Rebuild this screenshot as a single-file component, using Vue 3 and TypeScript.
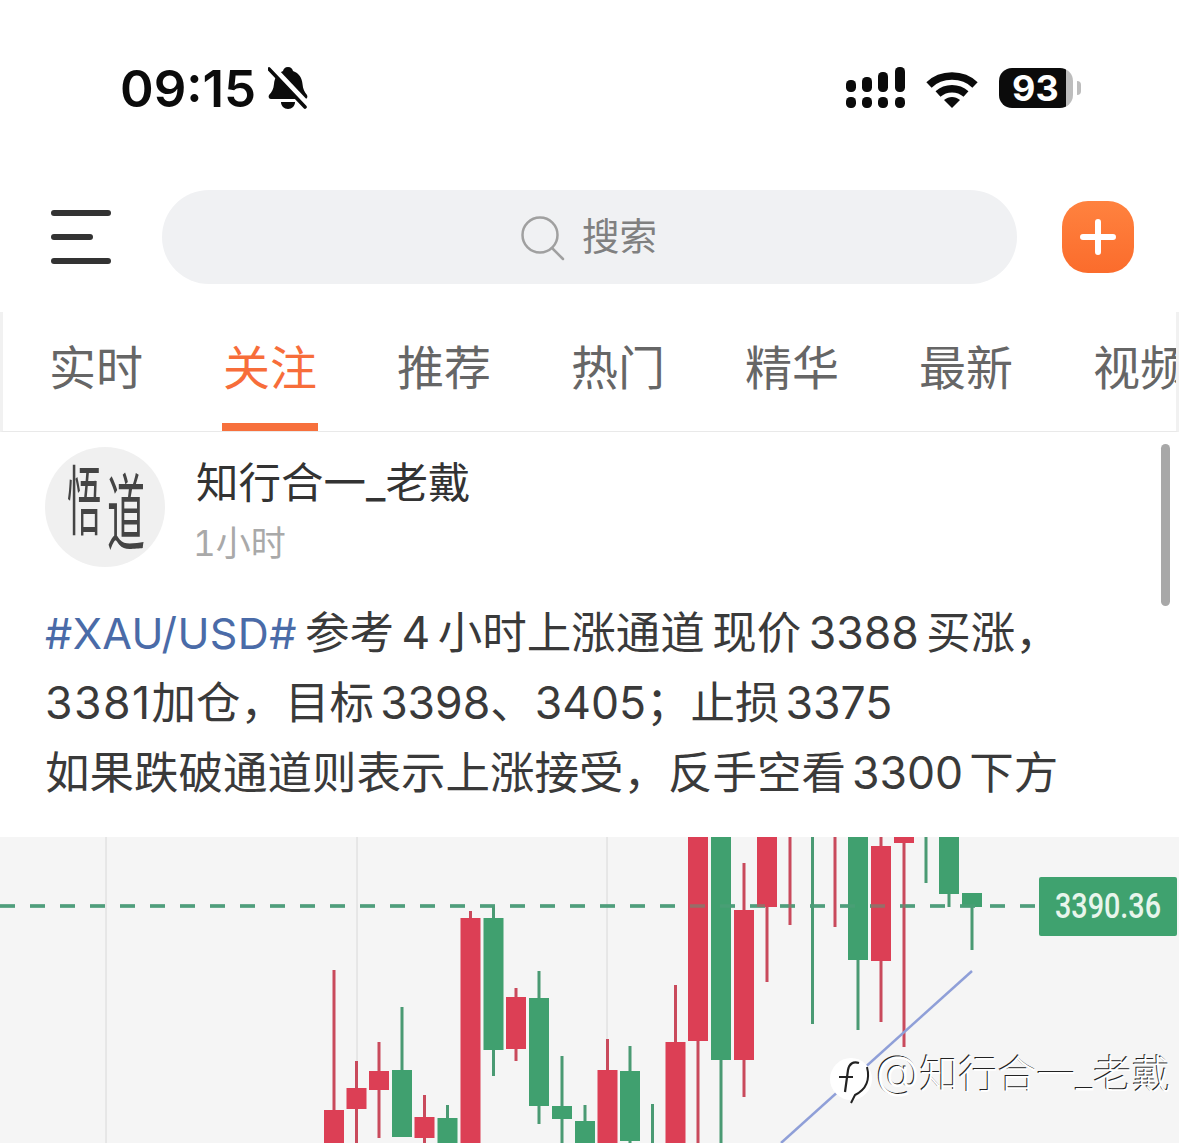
<script setup lang="ts">
type Candle = [number, 'r' | 'g', number, number, number, number]

const tabs: string[] = ['实时', '关注', '推荐', '热门', '精华', '最新', '视频']

// x, colour, wick top, wick bottom, body top, body bottom
const candles: Candle[] = [
  [334, 'r', 970, 1150, 1110, 1150],
  [356.5, 'r', 1061, 1150, 1088, 1109],
  [379, 'r', 1042, 1138, 1071, 1090],
  [402, 'g', 1007, 1137, 1070, 1137],
  [424.5, 'r', 1095, 1150, 1117, 1138],
  [447.5, 'g', 1105, 1150, 1118, 1150],
  [470.5, 'r', 911, 1150, 918, 1150],
  [493.5, 'g', 906, 1076, 918, 1050],
  [516, 'r', 988, 1061, 997, 1049],
  [539, 'g', 971, 1124, 998, 1106],
  [562, 'g', 1056, 1150, 1106, 1119],
  [585, 'g', 1105, 1150, 1121, 1150],
  [607.5, 'r', 1039, 1150, 1070, 1150],
  [630, 'g', 1046, 1150, 1071, 1141],
  [652.5, 'g', 1104, 1150, 1150, 1150],
  [675.5, 'r', 985, 1150, 1042, 1150],
  [698, 'r', 830, 1150, 830, 1041],
  [721, 'g', 830, 1150, 830, 1060],
  [744, 'r', 863, 1097, 910, 1060],
  [767, 'r', 830, 982, 830, 907],
  [790, 'r', 830, 925, 830, 830],
  [812.5, 'g', 830, 1024, 830, 830],
  [835, 'r', 830, 927, 830, 830],
  [858, 'g', 830, 1030, 830, 960],
  [881, 'r', 830, 1022, 846, 961],
  [904, 'r', 830, 1047, 830, 843],
  [926, 'g', 830, 883, 830, 830],
  [949, 'g', 830, 907, 830, 894],
  [972, 'g', 893, 950, 893, 907],
]

const bars: [number, number, number][] = [
  [846, 80, 12], [862, 77, 15], [878, 72, 20], [895, 67, 25],
]
const dots: number[] = [846, 862, 878, 895]
</script>

<template>
  <div class="page">
    <div class="status">
      <span class="time">09:15</span>
      <svg class="bell" width="40" height="42" viewBox="0 0 40 42">
        <path d="M20 0c3 0 4.500 2 5 4 6 2 9 7 9.500 13 .4 5 2 8 4.500 11 1 2 0 4-2 4H3c-2 0-3-2-2-4 3-3 4.500-6 5-11 .5-6 3.500-11 9-13 .5-2 2-4 5-4z" fill="#0b0b0b"/>
        <path d="M13 35h14c0 4-3 7-7 7s-7-3-7-7z" fill="#0b0b0b"/>
        <path d="M3 -1 39 37" stroke="#fff" stroke-width="6"/>
        <path d="M1 2 37 40" stroke="#0b0b0b" stroke-width="3.600" stroke-linecap="round"/>
      </svg>
      <svg class="signal" width="60" height="42" viewBox="846 67 60 42">
        <rect v-for="b in bars" :key="b[0]" :x="b[0]" :y="b[1]" width="10" :height="b[2]" rx="4.500" fill="#0b0b0b"/>
        <rect v-for="d in dots" :key="d" :x="d" y="97" width="10" height="11" rx="4.500" fill="#0b0b0b"/>
      </svg>
      <svg class="wifi" width="52" height="38" viewBox="0 0 52 38">
        <path d="M3 15C15 3 37 3 49 15" fill="none" stroke="#0b0b0b" stroke-width="7.500"/>
        <path d="M12 24c8-7 20-7 28 0" fill="none" stroke="#0b0b0b" stroke-width="7.500"/>
        <path d="M18 30c5-4 11-4 16 0l-8 8z" fill="#0b0b0b"/>
      </svg>
      <div class="battery">
        <div class="cell"><span class="level">93</span></div>
        <span class="nub"></span>
      </div>
    </div>

    <div class="searchbar">
      <div class="burger">
        <span class="bar"></span>
        <span class="bar short"></span>
        <span class="bar"></span>
      </div>
      <div class="search">
        <svg width="46" height="46" viewBox="0 0 46 46">
          <circle cx="20" cy="20" r="17.500" fill="none" stroke="#a0a0a0" stroke-width="2.500"/>
          <path d="M32 33 43 44" stroke="#a0a0a0" stroke-width="2.500" stroke-linecap="round"/>
        </svg>
        <span class="search-label">搜索</span>
      </div>
      <div class="plus">
        <svg width="36" height="36" viewBox="0 0 36 36">
          <path d="M18 3v30M3 18h30" stroke="#fff" stroke-width="6" stroke-linecap="round"/>
        </svg>
      </div>
    </div>

    <div class="tabs">
      <div v-for="(t, i) in tabs" :key="t" class="tab" :class="{ active: i === 1 }">{{ t }}</div>
    </div>

    <div class="post">
      <div class="scrollbar"></div>
      <div class="author">
        <div class="avatar">
          <span class="seal left">悟</span>
          <span class="seal right">道</span>
        </div>
        <div class="meta">
          <div class="name">知行合一_老戴</div>
          <div class="when">1小时</div>
        </div>
      </div>
      <div class="content">
        <div class="line"><span class="tag">#XAU/USD#</span> 参考 4 小时上涨通道 现价 3388 买涨，</div>
        <div class="line tight2"><span class="num">3381</span>加仓，目标 3398、3405；止损 3375</div>
        <div class="line tight">如果跌破通道则表示上涨接受，反手空看 3300 下方</div>
      </div>
    </div>

    <div class="chart">
      <svg class="plot" width="1179" height="306" viewBox="0 837 1179 306">
        <path d="M106 837v306M357 837v306M607 837v306" stroke="#d8d8d8" stroke-width="1"/>
        <path d="M0 906H1039" stroke="#4f9e7c" stroke-width="3.500" stroke-dasharray="15 15"/>
        <g v-for="c in candles" :key="c[0]">
          <rect :x="c[0] - 1.500" :y="c[2]" width="3" :height="c[3] - c[2]" :fill="c[1] === 'r' ? '#c94a5c' : '#4a9a73'"/>
          <rect :x="c[0] - 10" :y="c[4]" width="20" :height="Math.max(c[5] - c[4], 0)" :fill="c[1] === 'r' ? '#dc3f55' : '#40a06f'"/>
        </g>
        <path d="M0 906H1039" stroke="#4f9e7c" stroke-opacity="0.5" stroke-width="3.500" stroke-dasharray="15 15"/>
        <path d="M972 971 781 1143" stroke="#8f9fd8" stroke-width="2.500"/>
        <rect x="1039" y="877" width="138" height="59" rx="2" fill="#3fa26f"/>
        <text x="1055" y="918" class="price" textLength="106" lengthAdjust="spacingAndGlyphs">3390.36</text>
      </svg>
      <div class="mark">
        <svg class="mark-logo" width="46" height="52" viewBox="0 0 46 52">
          <circle cx="22" cy="24" r="21" fill="#fff"/>
          <path d="M30 8c-6-2-10 1-11 7l-3 22M10 22h14" fill="none" stroke="#222" stroke-width="2.200"/>
          <path d="M38 12c3 12 0 22-12 28l-4 8" fill="none" stroke="#222" stroke-width="2"/>
        </svg>
        <span class="mark-text"><span class="mark-at">@</span>知行合一_老戴</span>
      </div>
    </div>
  </div>
</template>

<style>
html, body { margin: 0; background: #fff; }
</style>

<style scoped>
.page {
  width: 1179px;
  height: 1143px;
  overflow: hidden;
  background: #fff;
  font-family: Inter, "Noto Sans CJK SC", sans-serif;
  display: flex;
  flex-direction: column;
}
.status {
  height: 176px;
  flex: none;
  display: flex;
  align-items: center;
  padding-left: 120px;
  box-sizing: border-box;
}
.time {
  font-size: 51px;
  font-weight: 600;
  color: #0b0b0b;
  letter-spacing: 0;
  line-height: 1;
}
.bell { margin-left: 12px; }
.signal { margin-left: auto; }
.wifi { margin-left: 20px; margin-top: 2px; }
.battery {
  display: flex;
  align-items: center;
  margin-left: 21px;
  margin-right: 98px;
}
.cell {
  width: 74px;
  height: 40px;
  border-radius: 13px;
  background: linear-gradient(90deg, #0b0b0b 90%, #bdbdbd 90%);
  display: flex;
  align-items: center;
  padding-left: 13px;
  box-sizing: border-box;
}
.level {
  color: #fff;
  font-size: 36px;
  font-weight: 700;
  line-height: 1;
}
.nub {
  width: 4px;
  height: 14px;
  margin-left: 4px;
  background: #bdbdbd;
  border-radius: 0 6px 6px 0;
}
.searchbar {
  flex: none;
  height: 94px;
  margin-top: 14px;
  display: flex;
  align-items: center;
  padding-left: 51px;
}
.burger {
  width: 60px;
  height: 54px;
  display: flex;
  flex-direction: column;
  justify-content: space-between;
}
.bar {
  display: block;
  height: 6px;
  width: 60px;
  border-radius: 3px;
  background: #333;
}
.bar.short { width: 42px; }
.search {
  margin-left: 51px;
  width: 855px;
  height: 94px;
  border-radius: 47px;
  background: #f0f1f3;
  display: flex;
  align-items: center;
  justify-content: center;
  box-sizing: border-box;
  padding-right: 2px;
}
.search svg { margin-top: 2px; }
.search-label {
  margin-left: 16px;
  font-size: 37.500px;
  color: #808080;
  line-height: 1;
}
.plus {
  margin-left: 45px;
  width: 72px;
  height: 72px;
  border-radius: 26px;
  background: linear-gradient(180deg, #ff823f, #fb6c2c);
  display: flex;
  align-items: center;
  justify-content: center;
}
.tabs {
  flex: none;
  height: 120px;
  margin-top: 28px;
  box-sizing: border-box;
  padding-left: 45px;
  display: flex;
  gap: 78px;
  border-bottom: 1px solid #e9e9e9;
  border-left: 3px solid #f1f1f1;
  border-right: 3px solid #f1f1f1;
  overflow: hidden;
}
.tab {
  flex: none;
  width: 96px;
  height: 119px;
  box-sizing: border-box;
  padding-top: 26px;
  font-size: 47px;
  line-height: 60px;
  color: #666;
  text-align: center;
  white-space: nowrap;
}
.tab.active {
  color: #f76d3a;
  border-bottom: 8px solid #f7703c;
}
.post {
  position: relative;
  flex: none;
  height: 405px;
  box-sizing: border-box;
  padding: 15px 0 0 45px;
}
.scrollbar {
  position: absolute;
  left: 1161px;
  top: 12px;
  width: 9px;
  height: 162px;
  border-radius: 5px;
  background: #a8a8a8;
}
.author {
  display: flex;
  height: 120px;
}
.avatar {
  width: 120px;
  height: 120px;
  border-radius: 50%;
  background: #f0f0f0;
  display: flex;
  align-items: center;
  justify-content: center;
  gap: 0;
  overflow: hidden;
}
.seal {
  display: block;
  width: 38px;
  font-size: 38px;
  font-weight: 400;
  line-height: 1;
  color: #444;
}
.seal.left { transform: translate(-2px, -6px) scale(0.9, 2); }
.seal.right { transform: translate(2px, 6px) scale(1, 2.200); }
.meta { margin-left: 31px; }
.name {
  margin-top: 12px;
  font-size: 42.500px;
  line-height: 48px;
  color: #333;
  white-space: nowrap;
}
.when {
  margin-top: 12px;
  margin-left: -3px;
  font-size: 35px;
  line-height: 48px;
  color: #a9a9a9;
  white-space: nowrap;
  font-variant-numeric: tabular-nums;
}
.content {
  margin-top: 31px;
}
.line {
  height: 70px;
  line-height: 70px;
  font-size: 44.500px;
  word-spacing: -5px;
  color: #3a3a3a;
  white-space: nowrap;
}
.line.tight { word-spacing: -6.500px; }
.line.tight2 { word-spacing: -6.500px; }
.num { letter-spacing: 1.500px; }
.tag { color: #4a6ba8; font-size: 43px; letter-spacing: 0.4px; margin-right: 0.5px; }
.chart {
  position: relative;
  flex: none;
  height: 306px;
  background: #f5f5f5;
  overflow: hidden;
}
.plot { display: block; }
.price {
  font-family: Roboto, sans-serif;
  font-size: 35px;
  font-weight: 500;
  fill: #e8f5ec;
}
.mark {
  position: absolute;
  left: 829px;
  top: 213px;
  display: flex;
  align-items: flex-start;
}
.mark-logo { display: block; margin-top: 5px; }
.mark-text {
  margin-left: 1px;
  font-size: 39px;
  line-height: 48px;
  font-weight: 300;
  color: #fff;
  white-space: nowrap;
  text-shadow: -1px -1px 0 #222;
}
.mark-at { font-size: 45px; line-height: 40px; }
</style>
